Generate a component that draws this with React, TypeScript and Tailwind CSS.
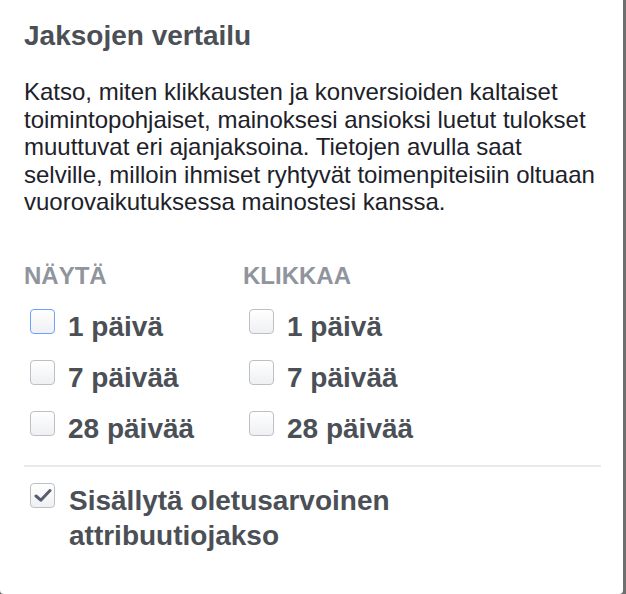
import { Fragment } from "react";

/**
 * Jaksojen vertailu – attribution window comparison panel.
 */

interface BoxProps {
  checked?: boolean;
  focused?: boolean;
}

function Box({ checked, focused }: BoxProps) {
  return (
    <span
      className={`flex h-[25px] w-[25px] shrink-0 items-center justify-center rounded-[4px] border bg-gradient-to-b from-[#ffffff] to-[#eff0f2] ${
        focused ? "border-[#6ea0ff]" : "border-[#bcc0c6]"
      }`}
    >
      {checked && (
        <svg width="18" height="15" viewBox="0 0 18 15" fill="none">
          <path
            d="M2 8 L6.8 12.2 L16 2.5"
            stroke="#565c6b"
            strokeWidth="3"
            strokeLinecap="round"
            strokeLinejoin="round"
          />
        </svg>
      )}
    </span>
  );
}

interface OptionProps {
  label: string;
  checked?: boolean;
  focused?: boolean;
}

function Option({ label, checked, focused }: OptionProps) {
  return (
    <label className="flex items-start gap-[13px] pl-[6px]">
      <Box checked={checked} focused={focused} />
      <span className="text-[28px] font-bold leading-[35px] text-[#4b4f56]">{label}</span>
    </label>
  );
}

const columns = [
  { title: "NÄYTÄ", options: ["1 päivä", "7 päivää", "28 päivää"] },
  { title: "KLIKKAA", options: ["1 päivä", "7 päivää", "28 päivää"] },
];

export default function App() {
  return (
    <div className="h-[594px] w-[626px] bg-[#6f6f6f] font-['Liberation_Sans',Arial,sans-serif]">
      <div className="h-full w-[623px] overflow-hidden rounded-b-[4px] bg-white px-[24px] pt-[20px]">
        <h2 className="text-[28px] font-bold leading-[32px] text-[#4b4f56]">Jaksojen vertailu</h2>

        <p className="mt-[26px] w-[576px] text-[24px] leading-[27.6px] text-[#1d2129]">
          Katso, miten klikkausten ja konversioiden kaltaiset toimintopohjaiset, mainoksesi ansioksi
          luetut tulokset muuttuvat eri ajanjaksoina. Tietojen avulla saat selville, milloin ihmiset
          ryhtyvät toimenpiteisiin oltuaan vuorovaikutuksessa mainostesi kanssa.
        </p>

        <div className="mt-[46px] grid w-[576px] grid-cols-[219px_1fr]">
          {columns.map((col, ci) => (
            <Fragment key={col.title}>
              <div className="flex flex-col">
                <h3 className="text-[24px] font-bold leading-[28px] text-[#90949c]">{col.title}</h3>
                <div className="mt-[19px] flex flex-col gap-[16px]">
                  {col.options.map((opt, oi) => (
                    <Option key={opt} label={opt} focused={ci === 0 && oi === 0} />
                  ))}
                </div>
              </div>
            </Fragment>
          ))}
        </div>

        <div className="mt-[19px] h-[2px] w-[577px] bg-[#e9eaed]" />

        <div className="mt-[16px] w-[576px]">
          <label className="flex items-start gap-[14px] pl-[6px]">
            <Box checked />
            <span className="text-[28px] font-bold leading-[35px] text-[#4b4f56]">
              Sisällytä oletusarvoinen attribuutiojakso
            </span>
          </label>
        </div>
      </div>
    </div>
  );
}
